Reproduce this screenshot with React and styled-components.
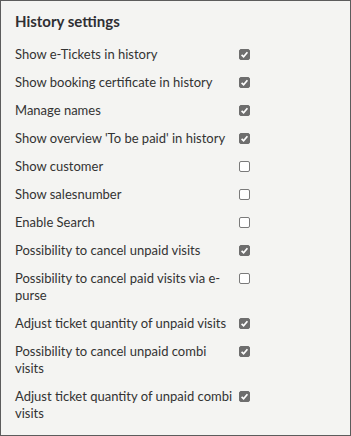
import React from "react";
import styled, { createGlobalStyle } from "styled-components";

const GlobalStyle = createGlobalStyle`
  body {
    margin: 0;
    font-family: Lato, "Liberation Sans", sans-serif;
  }
`;

const settings = [
  { label: "Show e-Tickets in history", checked: true },
  { label: "Show booking certificate in history", checked: true },
  { label: "Manage names", checked: true },
  { label: "Show overview 'To be paid' in history", checked: true },
  { label: "Show customer", checked: false },
  { label: "Show salesnumber", checked: false },
  { label: "Enable Search", checked: false },
  { label: "Possibility to cancel unpaid visits", checked: true },
  { label: "Possibility to cancel paid visits via e-purse", checked: false },
  { label: "Adjust ticket quantity of unpaid visits", checked: true },
  { label: "Possibility to cancel unpaid combi visits", checked: true },
  { label: "Adjust ticket quantity of unpaid combi visits", checked: true },
];

export default function App() {
  return (
    <>
      <GlobalStyle />
      <Panel>
        <Title>History settings</Title>
        <List>
          {settings.map((s, i) => (
            <Row key={i}>
              <Label>{s.label}</Label>
              <Box checked={s.checked}>
                {s.checked && (
                  <svg width="9" height="9" viewBox="0 0 9 9">
                    <path d="M1.6 4.8 L3.6 6.8 L7.4 2.2" fill="none" stroke="#fff" strokeWidth="1.7" />
                  </svg>
                )}
              </Box>
            </Row>
          ))}
        </List>
      </Panel>
    </>
  );
}

const Panel = styled.div`
  width: 351px;
  height: 436px;
  box-sizing: border-box;
  border: 1px solid #5c5c5c;
  background: #f4f4f2;
  padding: 10px 14px;
  color: #333;
`;

const Title = styled.h3`
  margin: 0;
  font-size: 15px;
  font-weight: 700;
  line-height: 20px;
  color: #2f2f33;
`;

const List = styled.div`
  display: flex;
  flex-direction: column;
  margin-top: 9px;
`;

const Row = styled.div`
  display: flex;
  align-items: flex-start;
  gap: 4px;
  padding: 5.5px 0;
`;

const Label = styled.div`
  width: 220px;
  font-size: 13px;
  line-height: 17px;
  color: #333;
`;

const Box = styled.div`
  width: 11px;
  height: 11px;
  margin-top: 3px;
  box-sizing: border-box;
  border-radius: 2px;
  display: flex;
  align-items: center;
  justify-content: center;
  background: ${(p) => (p.checked ? "#6e6e6e" : "#fff")};
  border: 1px solid ${(p) => (p.checked ? "#6e6e6e" : "#7a7a7a")};
`;
